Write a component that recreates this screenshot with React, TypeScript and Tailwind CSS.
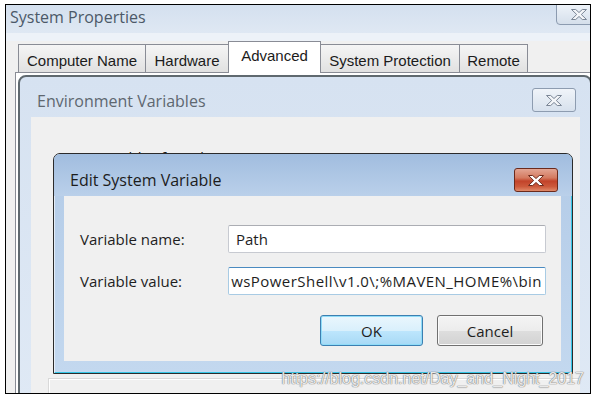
import React from "react";

function CloseGlyph({ fill, stroke }: { fill: string; stroke: string }) {
  return (
    <svg width="18" height="13" viewBox="0 0 18 13">
      <path
        d="M1.5 1.5h4.2l3.3 3 3.3-3h4.2l-5.2 5 5.2 5h-4.2l-3.3-3-3.3 3H1.5l5.2-5z"
        fill={fill}
        stroke={stroke}
        strokeWidth="1"
        strokeLinejoin="round"
      />
    </svg>
  );
}

function Tab({ label, className }: { label: string; className: string }) {
  return (
    <div
      className={`flex h-[28px] items-start justify-center border border-b-0 border-[#898c95] bg-gradient-to-b from-[#f5f5f5] to-[#e1e1e1] pt-[7px] leading-[17px] ${className}`}
    >
      {label}
    </div>
  );
}

export default function App() {
  return (
    <div className="h-[398px] w-[593px] bg-white pl-[5px] pt-[4px]">
      <div className="relative h-[390px] w-[586px] overflow-hidden border border-black bg-[#f0f0f0] font-['Open_Sans',sans-serif]">
        {/* System Properties window */}
        <div className="flex h-full flex-col">
          <div className="flex h-[28px] shrink-0 items-start justify-between bg-gradient-to-b from-[#d4e0ef] to-[#dfe8f3]">
            <span className="pl-[4px] pt-[1px] text-[16px] leading-[22px] text-[#4c5968]">
              System Properties
            </span>
            <div className="-mr-[11px] -mt-px flex h-[21px] w-[45px] items-center justify-center rounded-b-[4px] border border-[#8c9bb0] bg-gradient-to-b from-[#eef3f9] to-[#d5dfeb]">
              <CloseGlyph fill="#f4f6f9" stroke="#7a8595" />
            </div>
          </div>
          <div className="h-[8px] shrink-0 bg-[#edf2f8]" />
          <div className="flex h-[31px] shrink-0 items-end pl-[12px] font-['Liberation_Sans',sans-serif] text-[15px] text-[#1b1b1b]">
            <Tab label="Computer Name" className="w-[128px]" />
            <Tab label="Hardware" className="-ml-px w-[84px]" />
            <div className="relative z-10 -mb-px -ml-px flex h-[32px] w-[93px] items-start justify-center border border-b-0 border-[#898c95] bg-white pt-[5px] leading-[17px]">
              Advanced
            </div>
            <Tab label="System Protection" className="-ml-px w-[140px]" />
            <Tab label="Remote" className="-ml-px w-[69px]" />
          </div>
          <div className="ml-[9px] flex-1 border-l border-t border-[#898c95] bg-white" />
        </div>

        {/* Environment Variables window */}
        <div className="absolute left-[12px] top-[70px] flex h-[330px] w-[574px] flex-col rounded-t-[8px] border-2 border-[#5f696f] bg-gradient-to-b from-[#d6e2f1] to-[#dfe9f5]">
          <div className="flex h-[40px] shrink-0 items-start">
            <span className="pl-[17px] pt-[13px] text-[16px] leading-[22px] text-[#5e6770]">
              Environment Variables
            </span>
            <div className="ml-auto mr-[14px] mt-[11px] flex h-[24px] w-[44px] items-center justify-center rounded-[3px] border border-[#8d9cb0] bg-gradient-to-b from-[#f0f4f9] to-[#d7e1ed]">
              <CloseGlyph fill="#f4f6f9" stroke="#7a8595" />
            </div>
          </div>
          <div className="ml-[11px] mr-[10px] flex-1 bg-[#f0f0f0] pl-[27px] pt-[30px]">
            <div className="text-[15px] leading-[20px] text-[#1e1e1e]">User variables for Administrator</div>
            <div className="-ml-[10px] mt-[211px] h-[40px] border-l border-t border-[#d9d9d9]">
              <div className="h-full border-l border-t border-white" />
            </div>
          </div>
        </div>

        {/* Edit System Variable window */}
        <div className="absolute left-[47px] top-[148px] flex h-[221px] w-[520px] flex-col rounded-t-[7px] border border-[#2b2b2b] bg-gradient-to-b from-[#b3cbe7] to-[#c3d8ef] shadow-[inset_1px_1px_0_rgba(255,255,255,0.6),inset_-1px_-1px_0_#35c6e6]">
          <div className="flex h-[42px] shrink-0 items-start rounded-t-[6px] bg-gradient-to-b from-[#a1bddf] to-[#bad0ea]">
            <span className="pl-[16px] pt-[15px] text-[16px] leading-[22px] text-[#1c1c1c]">
              Edit System Variable
            </span>
            <div className="ml-auto mr-[14px] mt-[14px] flex h-[24px] w-[44px] items-center justify-center rounded-[3px] border border-[#6b2a1c] bg-[linear-gradient(#e3a593_0%,#d47a60_40%,#c2432a_55%,#cd5a3c_80%,#e08a6a_100%)]">
              <CloseGlyph fill="#ffffff" stroke="#6e2b1d" />
            </div>
          </div>
          <div className="mb-[12px] ml-[10px] mr-[11px] flex flex-1 flex-col bg-[#f0f0f0] pl-[16px] pr-[15px] pt-[29px] text-[15px] text-[#1e1e1e]">
            <div className="flex h-[28px] items-center">
              <span className="w-[148px] leading-[20px]">Variable name:</span>
              <div className="flex h-[28px] flex-1 items-center rounded-[2px] border border-[#c7cad1] border-t-[#abadb3] bg-white pl-[7px] leading-[20px]">
                Path
              </div>
            </div>
            <div className="mt-[14px] flex h-[28px] items-center">
              <span className="w-[148px] leading-[20px]">Variable value:</span>
              <div className="flex h-[28px] flex-1 items-center justify-end overflow-hidden whitespace-nowrap rounded-[2px] border border-[#a8cbe4] border-t-[#4a8ac0] bg-white pr-[3px] leading-[20px] tracking-[0.45px]">
                {"wsPowerShell\\v1.0\\;%MAVEN_HOME%\\bin"}
              </div>
            </div>
            <div className="mr-[3px] mt-[20px] flex justify-end gap-[14px]">
              <button className="flex h-[31px] w-[103px] items-center justify-center rounded-[3px] border border-[#3c7fb1] bg-[linear-gradient(#eaf6fd_0%,#d9f0fc_50%,#bee6fd_50%,#a7d9f5_100%)] leading-[20px] shadow-[inset_0_0_0_1px_#8fdcf8]">
                OK
              </button>
              <button className="flex h-[31px] w-[106px] items-center justify-center rounded-[3px] border border-[#707070] bg-[linear-gradient(#f4f4f4_0%,#ececec_50%,#dedede_50%,#d2d2d2_100%)] leading-[20px] shadow-[inset_0_0_0_1px_#fbfbfb]">
                Cancel
              </button>
            </div>
          </div>
        </div>

        {/* watermark */}
        <div className="absolute right-[6px] top-[365px] font-['Liberation_Sans',sans-serif] text-[16px] leading-[18px] text-white/85 [text-shadow:0_0_1px_#6b6b6b,0_0_1px_#6b6b6b]">
          https://blog.csdn.net/Day_and_Night_2017
        </div>
      </div>
    </div>
  );
}
